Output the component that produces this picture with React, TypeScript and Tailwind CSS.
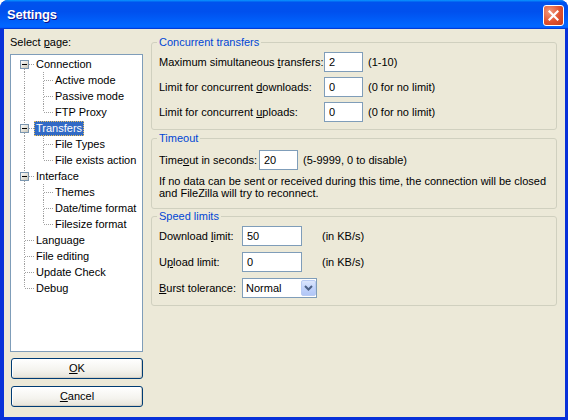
import React from 'react';

type Node = { label: string; children?: string[]; selected?: boolean };

const tree: Node[] = [
  { label: 'Connection', children: ['Active mode', 'Passive mode', 'FTP Proxy'] },
  { label: 'Transfers', children: ['File Types', 'File exists action'], selected: true },
  { label: 'Interface', children: ['Themes', 'Date/time format', 'Filesize format'] },
  { label: 'Language' },
  { label: 'File editing' },
  { label: 'Update Check' },
  { label: 'Debug' },
];

// one 19x16 connector cell of the tree
function Guide({ up, down, across, box }: { up?: boolean; down?: boolean; across?: boolean; box?: boolean }) {
  return (
    <svg width="19" height="16" className="shrink-0 block">
      {up && <line x1="9.5" y1="0" x2="9.5" y2="8" stroke="#a0a0a0" strokeDasharray="1 1" />}
      {down && <line x1="9.5" y1="9" x2="9.5" y2="16" stroke="#a0a0a0" strokeDasharray="1 1" />}
      {across && <line x1="10" y1="8.5" x2="19" y2="8.5" stroke="#a0a0a0" strokeDasharray="1 1" />}
      {box && (
        <>
          <defs>
            <linearGradient id="tb" x1="0" y1="0" x2="1" y2="1">
              <stop offset="0" stopColor="#ffffff" />
              <stop offset="1" stopColor="#c8c4b4" />
            </linearGradient>
          </defs>
          <rect x="5.5" y="4.5" width="8" height="8" fill="url(#tb)" stroke="#7a96b0" />
          <line x1="7" y1="8.5" x2="12" y2="8.5" stroke="#000" />
        </>
      )}
    </svg>
  );
}

function TreeLabel({ text, selected }: { text: string; selected?: boolean }) {
  return (
    <span
      className={
        selected
          ? 'h-[15px] px-[1px] flex items-center whitespace-nowrap bg-[#316ac5] text-white border border-dotted border-[#e8c060]'
          : 'h-[15px] px-[2px] flex items-center whitespace-nowrap'
      }
    >
      {text}
    </span>
  );
}

function PageTree() {
  const rows: React.ReactNode[] = [];
  tree.forEach((n, i) => {
    const first = i === 0;
    const last = i === tree.length - 1;
    rows.push(
      <div key={n.label} className="h-[16px] flex items-center pl-[4px]">
        <Guide up={!first} down={!last} across box={!!n.children} />
        <TreeLabel text={n.label} selected={n.selected} />
      </div>
    );
    (n.children || []).forEach((c, j) => {
      const lastChild = j === (n.children || []).length - 1;
      rows.push(
        <div key={c} className="h-[16px] flex items-center pl-[4px]">
          <Guide up={!last} down={!last} />
          <Guide up down={!lastChild} across />
          <TreeLabel text={c} />
        </div>
      );
    });
  });
  return <div className="h-[298px] bg-white border border-[#7f9db9] pt-[1px]">{rows}</div>;
}

function XpButton({ children }: { children: React.ReactNode }) {
  return (
    <button className="ml-[1px] w-[132px] h-[21px] rounded-[3px] border border-[#003c74] bg-[linear-gradient(to_bottom,#ffffff,#f4f3ee_60%,#e6e3d8)] shadow-[inset_-1px_-1px_0_#d6d0c5,inset_1px_1px_0_#ffffff] flex items-center justify-center text-black">
      {children}
    </button>
  );
}

function Input({ value, w }: { value: string; w: string }) {
  return (
    <input
      readOnly
      value={value}
      className={`${w} h-[20px] shrink-0 border border-[#7f9db9] bg-white px-[4px] text-[11px] text-black outline-none`}
    />
  );
}

function Group({ title, className, children }: { title: string; className?: string; children: React.ReactNode }) {
  return (
    <fieldset className={`border border-[#d0d0bf] rounded-[3px] pl-[5px] pr-[6px] min-w-0 ${className || ''}`}>
      <legend className="px-[2px] leading-[13px] text-[#0046d5]">{title}</legend>
      <div className="pl-[2px]">{children}</div>
    </fieldset>
  );
}

function Row({ children }: { children: React.ReactNode }) {
  return <div className="h-[20px] flex items-center whitespace-nowrap">{children}</div>;
}

export default function App() {
  return (
    <div className="w-[568px] h-[420px] flex flex-col bg-[#0831d9] rounded-t-[8px] overflow-hidden font-['Liberation_Sans',Arial,sans-serif] text-[11px] leading-[13px] text-black">
      {/* title bar */}
      <div className="h-[29px] shrink-0 flex items-center justify-between pl-[7px] pr-[4px] bg-[linear-gradient(to_bottom,#0997ff,#0053ee_8%,#0050ee_40%,#0066ff_88%,#0066ff_93%,#005bff_95%,#003dd7_96%,#003dd7)]">
        <span className="text-white font-bold text-[13px] tracking-[-0.2px] [text-shadow:1px_1px_0_#0f1089]">Settings</span>
        <button className="mt-[2px] w-[21px] h-[21px] rounded-[3px] border border-white bg-[radial-gradient(circle_at_30%_30%,#f19a7d,#e0522f_55%,#c23d1c)] flex items-center justify-center">
          <svg width="11" height="11" viewBox="0 0 11 11">
            <path d="M1.5 1.5 L9.5 9.5 M9.5 1.5 L1.5 9.5" stroke="#ffffff" strokeWidth="2.2" strokeLinecap="square" />
          </svg>
        </button>
      </div>

      {/* client area */}
      <div className="flex-1 ml-[4px] mr-[3px] mb-[3px] bg-[#ece9d8] flex pt-[7px] pl-[6px] pr-[8px]">
        <div className="w-[133px] shrink-0 flex flex-col">
          <div className="h-[13px] whitespace-nowrap">
            Select <span className="underline">p</span>age:
          </div>
          <div className="mt-[5px]">
            <PageTree />
          </div>
          <div className="mt-[6px]">
            <XpButton>
              <span className="underline">O</span>K
            </XpButton>
          </div>
          <div className="mt-[7px]">
            <XpButton>
              <span className="underline">C</span>ancel
            </XpButton>
          </div>
        </div>

        <div className="flex-1 ml-[8px] flex flex-col">
          <Group title="Concurrent transfers">
            <div className="pt-[3px] pb-[7px] flex flex-col gap-[5px]">
              <Row>
                <span className="w-[165px]">Maximum simultaneous <span className="underline">t</span>ransfers:</span>
                <Input value="2" w="w-[39px]" />
                <span className="ml-[5px]">(1-10)</span>
              </Row>
              <Row>
                <span className="w-[165px]">Limit for concurrent <span className="underline">d</span>ownloads:</span>
                <Input value="0" w="w-[39px]" />
                <span className="ml-[5px]">(0 for no limit)</span>
              </Row>
              <Row>
                <span className="w-[165px]">Limit for concurrent <span className="underline">u</span>ploads:</span>
                <Input value="0" w="w-[39px]" />
                <span className="ml-[5px]">(0 for no limit)</span>
              </Row>
            </div>
          </Group>

          <Group title="Timeout" className="mt-[2px]">
            <div className="pt-[5px] pb-[9px]">
              <Row>
                <span className="w-[100px]">Time<span className="underline">o</span>ut in seconds:</span>
                <Input value="20" w="w-[39px]" />
                <span className="ml-[5px]">(5-9999, 0 to disable)</span>
              </Row>
              <p className="mt-[5px] leading-[12px] whitespace-nowrap">
                If no data can be sent or received during this time, the connection will be closed
                <br />
                and FileZilla will try to reconnect.
              </p>
            </div>
          </Group>

          <Group title="Speed limits" className="mt-[1px]">
            <div className="pt-[3px] pb-[7px] flex flex-col gap-[6px]">
              <Row>
                <span className="w-[83px]">Download <span className="underline">l</span>imit:</span>
                <Input value="50" w="w-[60px]" />
                <span className="ml-[20px]">(in KB/s)</span>
              </Row>
              <Row>
                <span className="w-[83px]">U<span className="underline">p</span>load limit:</span>
                <Input value="0" w="w-[60px]" />
                <span className="ml-[20px]">(in KB/s)</span>
              </Row>
              <Row>
                <span className="w-[83px]"><span className="underline">B</span>urst tolerance:</span>
                <div className="w-[75px] h-[20px] border border-[#7f9db9] bg-white flex items-center justify-between pl-[3px]">
                  <span>Normal</span>
                  <span className="w-[15px] h-[16px] rounded-[2px] border border-[#b9cbf3] bg-[linear-gradient(to_bottom,#dce6fc,#c1d3fb_50%,#b1c6f6)] flex items-center justify-center">
                    <svg width="9" height="6" viewBox="0 0 9 6">
                      <path d="M1 1 L4.5 4.5 L8 1" fill="none" stroke="#4d6185" strokeWidth="2" />
                    </svg>
                  </span>
                </div>
              </Row>
            </div>
          </Group>
        </div>
      </div>
    </div>
  );
}
